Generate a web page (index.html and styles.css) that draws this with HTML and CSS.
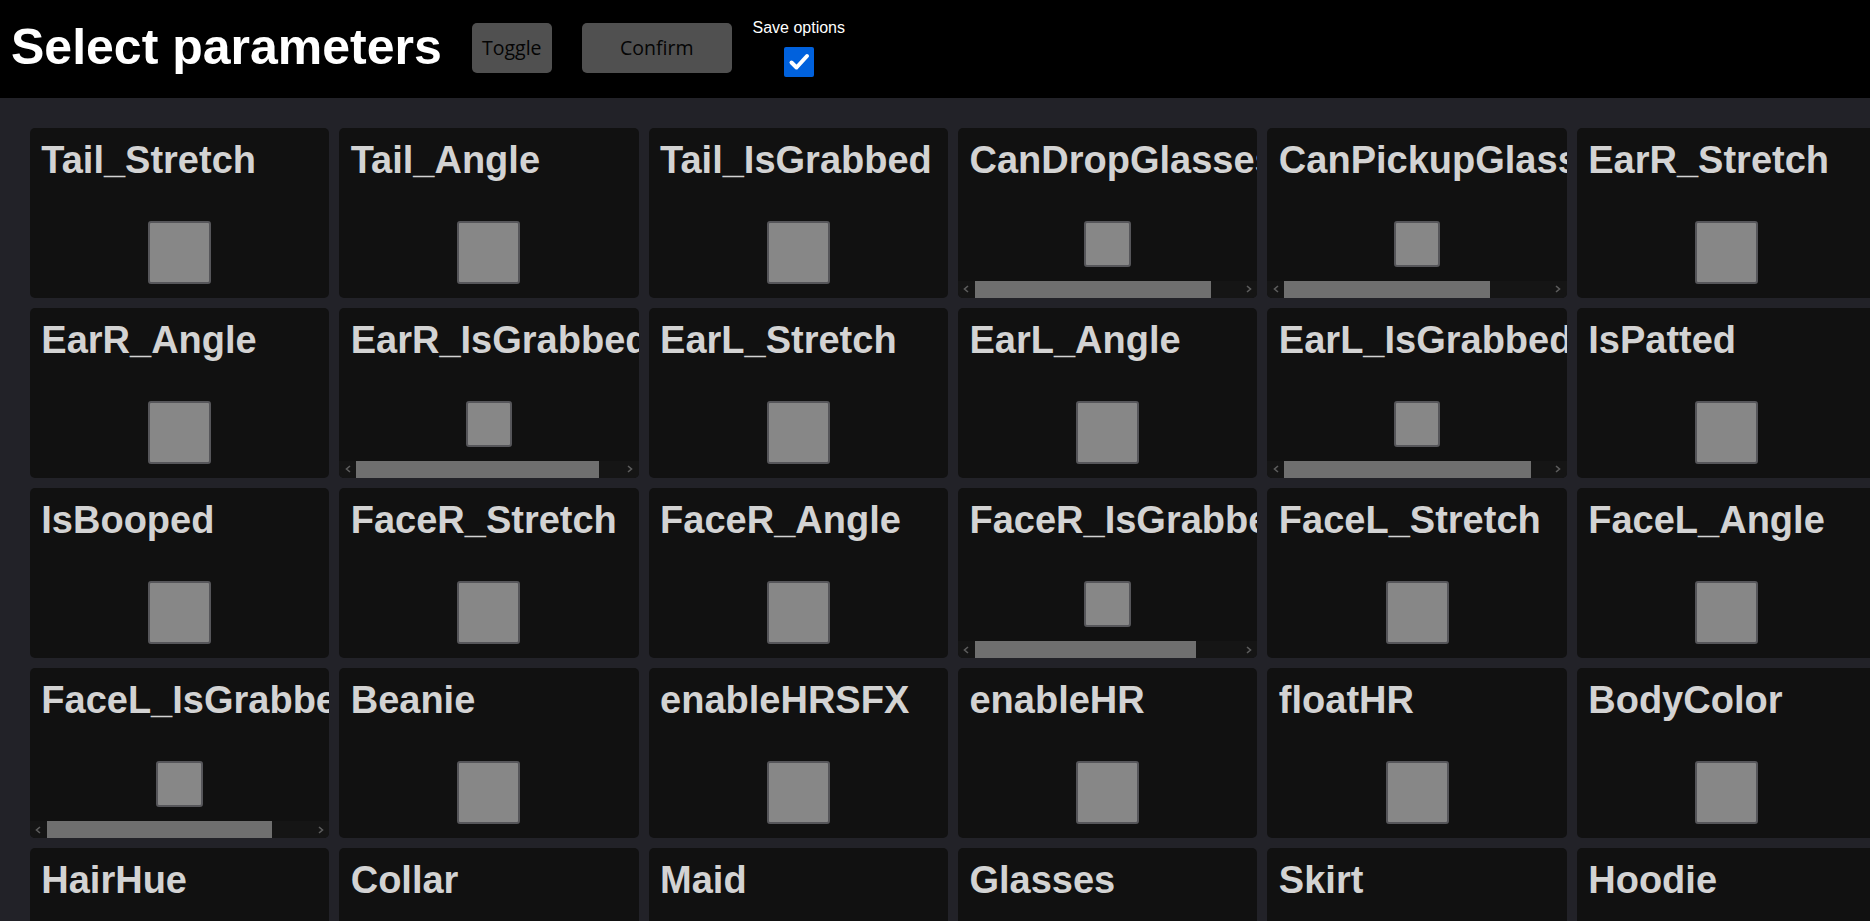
FILE: index.html
```html
<!DOCTYPE html>
<html lang="en">
<head>
<meta charset="utf-8">
<title>Select parameters</title>
<link rel="stylesheet" href="styles.css">
</head>
<body>
<header class="topbar">
  <h1 class="title">Select parameters</h1>
  <button class="btn btn-toggle" type="button">Toggle</button>
  <button class="btn btn-confirm" type="button">Confirm</button>
  <div class="save">
    <span class="save-label">Save options</span>
    <span class="check"><svg viewBox="0 0 30 30" width="30" height="30"><path d="M7.5 15.5 L12.5 20.5 L23 9" fill="none" stroke="#fff" stroke-width="4" stroke-linecap="round" stroke-linejoin="round"/></svg></span>
  </div>
</header>
<main class="grid">
  <div class="card"><h2 class="card-title">Tail_Stretch</h2><div class="sq"></div></div>
  <div class="card"><h2 class="card-title">Tail_Angle</h2><div class="sq"></div></div>
  <div class="card"><h2 class="card-title">Tail_IsGrabbed</h2><div class="sq"></div></div>
  <div class="card card-scroll"><h2 class="card-title">CanDropGlasses</h2><div class="sq"></div>
    <div class="hscroll"><span class="arr"><svg viewBox="0 0 6 8" width="6" height="8"><path d="M5 1 L1.5 4 L5 7" fill="none" stroke="#5c5c5c" stroke-width="1.6"/></svg></span><span class="thumb" style="width:236px"></span><span class="track"></span><span class="arr"><svg viewBox="0 0 6 8" width="6" height="8"><path d="M1 1 L4.5 4 L1 7" fill="none" stroke="#5c5c5c" stroke-width="1.6"/></svg></span></div></div>
  <div class="card card-scroll"><h2 class="card-title">CanPickupGlasses</h2><div class="sq"></div>
    <div class="hscroll"><span class="arr"><svg viewBox="0 0 6 8" width="6" height="8"><path d="M5 1 L1.5 4 L5 7" fill="none" stroke="#5c5c5c" stroke-width="1.6"/></svg></span><span class="thumb" style="width:206px"></span><span class="track"></span><span class="arr"><svg viewBox="0 0 6 8" width="6" height="8"><path d="M1 1 L4.5 4 L1 7" fill="none" stroke="#5c5c5c" stroke-width="1.6"/></svg></span></div></div>
  <div class="card"><h2 class="card-title">EarR_Stretch</h2><div class="sq"></div></div>

  <div class="card"><h2 class="card-title">EarR_Angle</h2><div class="sq"></div></div>
  <div class="card card-scroll"><h2 class="card-title">EarR_IsGrabbed</h2><div class="sq"></div>
    <div class="hscroll"><span class="arr"><svg viewBox="0 0 6 8" width="6" height="8"><path d="M5 1 L1.5 4 L5 7" fill="none" stroke="#5c5c5c" stroke-width="1.6"/></svg></span><span class="thumb" style="width:243px"></span><span class="track"></span><span class="arr"><svg viewBox="0 0 6 8" width="6" height="8"><path d="M1 1 L4.5 4 L1 7" fill="none" stroke="#5c5c5c" stroke-width="1.6"/></svg></span></div></div>
  <div class="card"><h2 class="card-title">EarL_Stretch</h2><div class="sq"></div></div>
  <div class="card"><h2 class="card-title">EarL_Angle</h2><div class="sq"></div></div>
  <div class="card card-scroll"><h2 class="card-title">EarL_IsGrabbed</h2><div class="sq"></div>
    <div class="hscroll"><span class="arr"><svg viewBox="0 0 6 8" width="6" height="8"><path d="M5 1 L1.5 4 L5 7" fill="none" stroke="#5c5c5c" stroke-width="1.6"/></svg></span><span class="thumb" style="width:247px"></span><span class="track"></span><span class="arr"><svg viewBox="0 0 6 8" width="6" height="8"><path d="M1 1 L4.5 4 L1 7" fill="none" stroke="#5c5c5c" stroke-width="1.6"/></svg></span></div></div>
  <div class="card"><h2 class="card-title">IsPatted</h2><div class="sq"></div></div>

  <div class="card"><h2 class="card-title">IsBooped</h2><div class="sq"></div></div>
  <div class="card"><h2 class="card-title">FaceR_Stretch</h2><div class="sq"></div></div>
  <div class="card"><h2 class="card-title">FaceR_Angle</h2><div class="sq"></div></div>
  <div class="card card-scroll"><h2 class="card-title">FaceR_IsGrabbed</h2><div class="sq"></div>
    <div class="hscroll"><span class="arr"><svg viewBox="0 0 6 8" width="6" height="8"><path d="M5 1 L1.5 4 L5 7" fill="none" stroke="#5c5c5c" stroke-width="1.6"/></svg></span><span class="thumb" style="width:221px"></span><span class="track"></span><span class="arr"><svg viewBox="0 0 6 8" width="6" height="8"><path d="M1 1 L4.5 4 L1 7" fill="none" stroke="#5c5c5c" stroke-width="1.6"/></svg></span></div></div>
  <div class="card"><h2 class="card-title">FaceL_Stretch</h2><div class="sq"></div></div>
  <div class="card"><h2 class="card-title">FaceL_Angle</h2><div class="sq"></div></div>

  <div class="card card-scroll"><h2 class="card-title">FaceL_IsGrabbed</h2><div class="sq"></div>
    <div class="hscroll"><span class="arr"><svg viewBox="0 0 6 8" width="6" height="8"><path d="M5 1 L1.5 4 L5 7" fill="none" stroke="#5c5c5c" stroke-width="1.6"/></svg></span><span class="thumb" style="width:225px"></span><span class="track"></span><span class="arr"><svg viewBox="0 0 6 8" width="6" height="8"><path d="M1 1 L4.5 4 L1 7" fill="none" stroke="#5c5c5c" stroke-width="1.6"/></svg></span></div></div>
  <div class="card"><h2 class="card-title">Beanie</h2><div class="sq"></div></div>
  <div class="card"><h2 class="card-title">enableHRSFX</h2><div class="sq"></div></div>
  <div class="card"><h2 class="card-title">enableHR</h2><div class="sq"></div></div>
  <div class="card"><h2 class="card-title">floatHR</h2><div class="sq"></div></div>
  <div class="card"><h2 class="card-title">BodyColor</h2><div class="sq"></div></div>

  <div class="card"><h2 class="card-title">HairHue</h2><div class="sq"></div></div>
  <div class="card"><h2 class="card-title">Collar</h2><div class="sq"></div></div>
  <div class="card"><h2 class="card-title">Maid</h2><div class="sq"></div></div>
  <div class="card"><h2 class="card-title">Glasses</h2><div class="sq"></div></div>
  <div class="card"><h2 class="card-title">Skirt</h2><div class="sq"></div></div>
  <div class="card"><h2 class="card-title">Hoodie</h2><div class="sq"></div></div>
</main>
</body>
</html>
```
FILE: styles.css
```css
html, body {
  margin: 0;
  padding: 0;
}
body {
  background: #222228;
  height: 100vh;
  overflow: hidden;
  font-family: "Liberation Sans", Arial, sans-serif;
}
.topbar {
  display: flex;
  align-items: flex-start;
  height: 97.7px;
  background: #000;
  padding-left: 11px;
  box-sizing: border-box;
}
.title {
  margin: 19px 0 0 0;
  font-family: "Liberation Sans", Arial, sans-serif;
  font-weight: 700;
  font-size: 50px;
  line-height: 57.5px;
  color: #fff;
  white-space: nowrap;
}
.btn {
  margin-top: 23.3px;
  height: 49.4px;
  border: none;
  border-radius: 5px;
  background: #505050;
  color: #050505;
  font-family: "Open Sans", "Noto Sans", sans-serif;
  font-size: 19.5px;
  padding: 0;
}
.btn-toggle {
  width: 80px;
  margin-left: 30px;
}
.btn-confirm {
  width: 150px;
  margin-left: 30px;
}
.save {
  display: flex;
  flex-direction: column;
  align-items: center;
  margin-left: 20.7px;
  margin-top: 18.5px;
}
.save-label {
  display: block;
  font-family: "Liberation Sans", Arial, sans-serif;
  font-size: 16px;
  line-height: 18.4px;
  color: #fff;
  white-space: nowrap;
}
.check {
  display: block;
  width: 30px;
  height: 30px;
  margin-top: 10.1px;
  background: #0061dd;
  border-radius: 2px;
}
.check svg {
  display: block;
}
.grid {
  display: grid;
  grid-template-columns: repeat(6, 299.4px);
  column-gap: 10px;
  row-gap: 10.1px;
  padding: 29.9px 0 0 29.8px;
}
.card {
  display: flex;
  flex-direction: column;
  height: 170px;
  background: #111111;
  border-radius: 5px;
  overflow: hidden;
}
.card-title {
  margin: 0;
  padding: 11.5px 0 0 11.5px;
  font-family: "Liberation Sans", Arial, sans-serif;
  font-weight: 700;
  font-size: 38px;
  line-height: 43px;
  color: #d3d3d3;
  white-space: nowrap;
}
.sq {
  box-sizing: border-box;
  width: 63px;
  height: 63px;
  margin: 38.5px auto 0;
  background: #878787;
  border: 2px solid #56565a;
  border-radius: 3px;
}
.card-scroll .sq {
  width: 46.5px;
  height: 46.5px;
}
.hscroll {
  display: flex;
  align-items: stretch;
  height: 16.5px;
  margin-top: auto;
  background: #151515;
}
.arr {
  display: flex;
  align-items: center;
  justify-content: center;
  width: 17px;
  flex: none;
}
.arr svg {
  display: block;
}
.thumb {
  display: block;
  flex: none;
  background: #6f6f6f;
}
.track {
  flex: 1;
}
```
